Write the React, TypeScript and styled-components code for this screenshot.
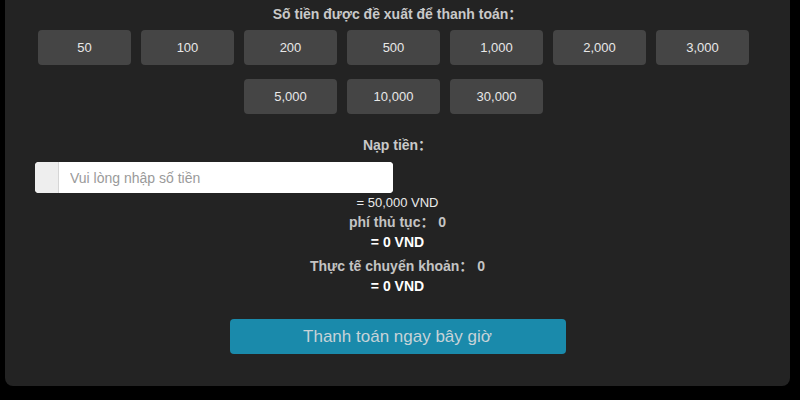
import React from "react";
import styled, { createGlobalStyle } from "styled-components";

const Global = createGlobalStyle`
  html, body {
    margin: 0;
    padding: 0;
    background: #000;
    font-family: "Liberation Sans", Arial, "Noto Sans CJK SC", sans-serif;
  }
`;

const Panel = styled.div`
  box-sizing: border-box;
  width: 785px;
  margin-left: 5px;
  background: #232323;
  border-radius: 0 0 8px 8px;
  padding: 4px 0 32px;
  display: flex;
  flex-direction: column;
  align-items: center;
`;

const Heading = styled.div`
  font-size: 14px;
  line-height: 20px;
  font-weight: bold;
  color: #c9c9c9;
`;

const AmountGrid = styled.div`
  box-sizing: border-box;
  margin-top: 6px;
  padding-left: 2px;
  display: flex;
  flex-wrap: wrap;
  justify-content: center;
  width: 100%;
`;

const AmountButton = styled.button`
  width: 93px;
  height: 35px;
  margin: 0 10px 14px 0;
  border: none;
  border-radius: 4px;
  background: #454545;
  color: #e8e8e8;
  font-family: inherit;
  font-size: 13px;
  padding: 0;
`;

const Label = styled(Heading)`
  margin-top: 7px;
`;

const InputRow = styled.div`
  align-self: stretch;
  padding-left: 30px;
  margin-top: 7px;
  display: flex;
`;

const InputGroup = styled.div`
  display: flex;
  width: 358px;
  height: 31px;
  border-radius: 4px;
  overflow: hidden;
  background: #fff;
`;

const Addon = styled.span`
  width: 23px;
  background: #eeeeee;
  border-right: 1px solid #d6d6d6;
`;

const AmountInput = styled.input`
  flex: 1;
  border: none;
  outline: none;
  padding: 0 11px;
  font-family: inherit;
  font-size: 14px;
  color: #333;
  background: #fff;
  &::placeholder {
    color: #9a9a9a;
  }
`;

const Converted = styled.div`
  margin-top: 1px;
  font-size: 13px;
  line-height: 18px;
  color: #eaeaea;
`;

const Summary = styled.div<{ $gap: number }>`
  margin-top: ${(p) => p.$gap}px;
  display: flex;
  flex-direction: column;
  align-items: center;
`;

const SummaryLabel = styled.div`
  font-size: 14px;
  line-height: 20px;
  font-weight: bold;
  color: #c4c4c4;
`;

const SummaryValue = styled.div`
  font-size: 14px;
  line-height: 20px;
  font-weight: bold;
  color: #fff;
`;

const PayButton = styled.button`
  margin-top: 23px;
  width: 336px;
  height: 35px;
  border: none;
  border-radius: 4px;
  background: #1a8aab;
  color: #c7d3d8;
  font-family: inherit;
  font-size: 17px;
  padding: 0;
`;

const amounts = ["50", "100", "200", "500", "1,000", "2,000", "3,000", "5,000", "10,000", "30,000"];

export default function App() {
  return (
    <>
      <Global />
      <Panel>
        <Heading>Số tiền được đề xuất để thanh toán：</Heading>
        <AmountGrid>
          {amounts.map((a) => (
            <AmountButton key={a}>{a}</AmountButton>
          ))}
        </AmountGrid>
        <Label>Nạp tiền：</Label>
        <InputRow>
          <InputGroup>
            <Addon />
            <AmountInput placeholder="Vui lòng nhập số tiền" />
          </InputGroup>
        </InputRow>
        <Converted>= 50,000 VND</Converted>
        <Summary $gap={0}>
          <SummaryLabel>phí thủ tục：&nbsp;0</SummaryLabel>
          <SummaryValue>= 0 VND</SummaryValue>
        </Summary>
        <Summary $gap={4}>
          <SummaryLabel>Thực tế chuyển khoản：&nbsp;0</SummaryLabel>
          <SummaryValue>= 0 VND</SummaryValue>
        </Summary>
        <PayButton>Thanh toán ngay bây giờ</PayButton>
      </Panel>
    </>
  );
}
